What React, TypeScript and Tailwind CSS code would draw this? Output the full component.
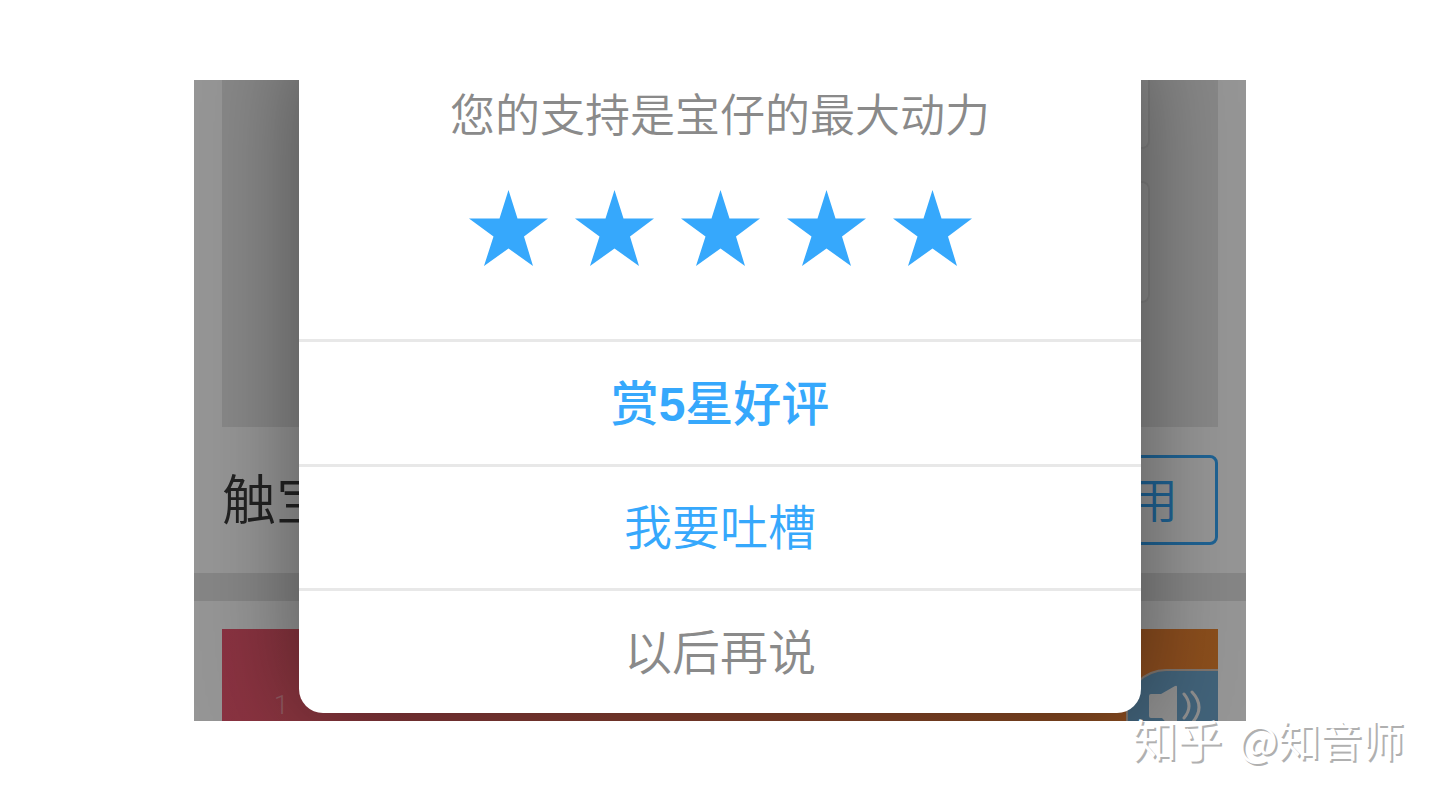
import React, { useState } from 'react'

const actions = [
  {
    label: (
      <>
        赏<span className="font-['Liberation_Sans',sans-serif] font-bold">5</span>星好评
      </>
    ),
    style: 'font-medium text-[#36a8fc]'
  },
  { label: '我要吐槽', style: 'pb-1.5 font-[350] text-[#36a8fc]' },
  { label: '以后再说', style: 'pb-1.5 font-[350] text-[#8a8a8a]' }
]

export default function App() {
  return (
    <main className="relative bg-white px-6 py-20 font-['Noto_Sans_CJK_SC',sans-serif]">
      <section className="relative mx-auto max-w-[1052px] overflow-hidden bg-white">
        <AppPage />
        <div className="absolute inset-0 bg-black/41" />
        <RatingDialog />
      </section>
      <Watermark />
    </main>
  )
}

/* Page behind the dialog */
function AppPage() {
  return (
    <div>
      <div className="mx-7 flex h-[347px] flex-col items-end gap-8 bg-[#e8e8e8] pr-[68px]">
        <div className="h-[69px] w-72 rounded-b-lg border-2 border-t-0 border-[#dcdcdc] bg-[#f0f0f0]" />
        <div className="h-[122px] w-72 rounded-lg border-2 border-[#dcdcdc] bg-[#f0f0f0]" />
      </div>
      <div className="flex items-center justify-between px-7 py-7">
        <h1 className="pb-1.5 text-[54px] leading-[84px] font-[350] text-[#3a3a3a]">触宝</h1>
        <button className="h-[90px] w-44 cursor-pointer rounded-lg border-3 border-[#36a8fc] pb-1.5 text-[48px] leading-[48px] font-[350] text-[#36a8fc]">
          试用
        </button>
      </div>
      <div className="h-7 bg-[#e4e4e4]" />
      <div className="mx-7 mt-7 flex h-[92px] items-end justify-between bg-linear-to-r from-[#ea5670] via-[#e5704d] to-[#ed8630]">
        <span className="pl-[52px] font-['Roboto',sans-serif] text-[26px] leading-8 font-light text-[#f59aa6]">1</span>
        <button
          aria-label="播放声音"
          className="h-[52px] w-[92px] cursor-pointer rounded-tl-[40px] border-t-2 border-l-2 border-[#d9c8bc] bg-[#70a8d0] pl-5"
        >
          <SpeakerIcon />
        </button>
      </div>
    </div>
  )
}

function SpeakerIcon() {
  return (
    <svg width="56" height="50" viewBox="0 0 56 50" fill="none">
      <path d="M3 23h10l14-8q2-1 2 1v44q0 2-2 1L14 47H3q-2 0-2-2V25q0-2 2-2z" fill="#f4f4f4" />
      <path d="M36 23q10 12 0 24M44 21q14 15 0 31" stroke="#f4f4f4" strokeWidth="3" strokeLinecap="round" />
    </svg>
  )
}

function RatingDialog() {
  const [rating, setRating] = useState(5)

  return (
    <div
      role="dialog"
      aria-labelledby="rating-title"
      className="absolute inset-x-[10%] -top-10 bottom-2 flex flex-col rounded-3xl bg-white shadow-[0_0_100px_rgba(0,0,0,0.44)]"
    >
      <h2 id="rating-title" className="pt-[49px] text-center text-[45px] leading-12 font-[350] text-[#8a8a8a]">
        您的支持是宝仔的最大动力
      </h2>
      <div className="mt-[53px] mb-[73px] flex justify-center gap-[27px]">
        {[1, 2, 3, 4, 5].map((n) => (
          <button key={n} onClick={() => setRating(n)} aria-label={`${n}星`} className="cursor-pointer">
            <Star active={n <= rating} />
          </button>
        ))}
      </div>
      <div className="grid flex-1 grid-rows-3">
        {actions.map((action, idx) => (
          <button
            key={idx}
            className={`cursor-pointer border-t-3 border-[#e8e8e8] text-[48px] leading-[48px] ${action.style}`}
          >
            {action.label}
          </button>
        ))}
      </div>
    </div>
  )
}

function Star({ active }: { active: boolean }) {
  return (
    <svg width="79" height="76" viewBox="0 0 79 76" className={active ? 'fill-[#36a8fc]' : 'fill-gray-300'}>
      <path d="M39.5 0L48.5 28.5H79L55 46.5L64 76L39.5 58.5L15 76L24.5 46.5L0 28.5H30.5Z" />
    </svg>
  )
}

function Watermark() {
  return (
    <p className="absolute right-9 bottom-[30px] flex items-center gap-4 leading-[64px] text-white [text-shadow:2px_2px_0_#b0b0b0]">
      <span className="text-[45px]">知乎</span>
      <span className="text-[42px]">@知音师</span>
    </p>
  )
}
